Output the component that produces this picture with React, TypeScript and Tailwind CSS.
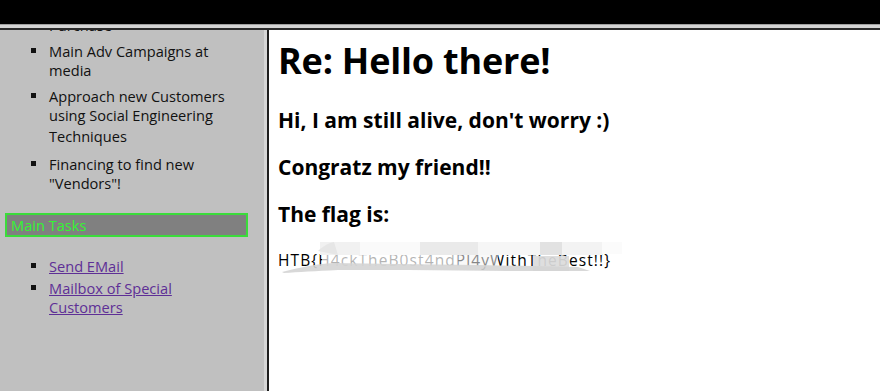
import React from "react"

type Item = { lines: string[]; tall?: number }

const adminTasks: Item[] = [
    { lines: ["Main Adv Campaigns at", "media"] },
    { lines: ["Approach new Customers", "using Social Engineering", "Techniques"], tall: 2 },
    { lines: ["Financing to find new", "\"Vendors\"!"] },
]

const links = [["Send EMail"], ["Mailbox of Special", "Customers"]]

function Bullet() {
    return <span className="mt-[6px] h-[5px] w-[5px] shrink-0 bg-[#111]" />
}

function Redaction() {
    // scribble + mosaic that hides the middle of the flag
    return (
        <svg
            className="pointer-events-none absolute left-0 top-0 overflow-visible"
            width="360"
            height="30"
            viewBox="0 0 360 30"
        >
            <rect x="42" y="-11" width="40" height="13" fill="#f1f1f1" />
            <rect x="82" y="-11" width="60" height="13" fill="#fafafa" />
            <rect x="142" y="-11" width="58" height="13" fill="#eaeaea" />
            <rect x="200" y="-11" width="62" height="13" fill="#f6f6f6" />
            <rect x="262" y="-11" width="22" height="13" fill="#e2e2e2" />
            <rect x="284" y="-11" width="40" height="13" fill="#f3f3f3" />
            <rect x="324" y="-11" width="20" height="12" fill="#fbfbfb" />
            <rect x="44" y="2" width="136" height="12" fill="#ffffff" opacity="0.7" />
            <rect x="180" y="2" width="40" height="12" fill="#f4f4f4" opacity="0.55" />
            <rect x="255" y="3" width="36" height="15" fill="#dcdcdc" opacity="0.93" />
            <path
                d="M4 19 C 20 15, 36 11, 56 10 L 120 11 L 200 12 L 300 14 L 312 18 L 230 18 L 130 17 L 60 17 C 38 18, 20 19, 6 20 Z"
                fill="#d4d4d4"
                opacity="0.9"
            />
            <path d="M40 -2 C 44 -6, 50 -10, 56 -11 L 60 2 Z" fill="#e6e6e6" />
        </svg>
    )
}

export default function App() {
    return (
        <div className="flex h-[391px] w-[880px] flex-col overflow-hidden bg-white font-['Open_Sans',sans-serif] text-[#111]">
            <div className="h-6 shrink-0 bg-black" />
            <div className="h-px shrink-0 bg-[#a0a0a0]" />
            <div className="h-[3px] shrink-0 bg-[#d4d4d4]" />
            <div className="h-[2px] shrink-0 bg-[#2a2a2a]" />

            <div className="flex min-h-0 flex-1">
                {/* left frame */}
                <aside className="w-[267px] shrink-0 overflow-hidden border-r-[3px] border-[#d6d6d6] bg-[#c0c0c0] text-[14.6px] leading-[19px]">
                    <div className="-mt-[14px]">
                        <div className="flex gap-[13px] pl-[31px]">
                            <Bullet />
                            <div>Purchase</div>
                        </div>

                        {adminTasks.map((item, i) => (
                            <div key={i} className="mt-[7px] flex gap-[13px] pl-[31px]">
                                <Bullet />
                                <div>
                                    {item.lines.map((l, j) => (
                                        <div
                                            key={j}
                                            className={item.tall === j ? "leading-[23px]" : ""}
                                        >
                                            {l}
                                        </div>
                                    ))}
                                </div>
                            </div>
                        ))}

                        <div className="ml-[5px] mt-[20px] h-[24px] w-[243px] border-2 border-[#3bdc3b] bg-[#808080] pl-[4px] leading-[20px] text-[#33f533]">
                            Main Tasks
                        </div>

                        <div className="mt-[20px]">
                            {links.map((l, i) => (
                                <div key={i} className="mt-[3px] flex gap-[13px] pl-[31px]">
                                    <Bullet />
                                    <a href="#" className="text-[#5e2f96] underline">
                                        {l.map((t, j) => (
                                            <div key={j}>{t}</div>
                                        ))}
                                    </a>
                                </div>
                            ))}
                        </div>
                    </div>
                </aside>
                <div className="w-[2px] shrink-0 bg-[#1e1e1e]" />

                {/* message frame */}
                <main className="flex-1 pl-[9px] pt-[13px] text-black">
                    <h1 className="text-[36px] font-bold leading-none tracking-[-0.2px]">Re: Hello there!</h1>
                    <h3 className="mt-[31px] text-[21px] font-bold leading-none">
                        Hi, I am still alive, don't worry :)
                    </h3>
                    <h3 className="mt-[26px] text-[21px] font-bold leading-none">
                        Congratz my friend!!
                    </h3>
                    <h3 className="mt-[26px] text-[21px] font-bold leading-none">The flag is:</h3>
                    <p className="relative mt-[28px] text-[15.5px] leading-none tracking-[1.1px]">
                        HTB{"{"}H4ckTheB0st4ndPl4yWithTheBest!!{"}"}
                        <Redaction />
                    </p>
                </main>
            </div>
        </div>
    )
}
